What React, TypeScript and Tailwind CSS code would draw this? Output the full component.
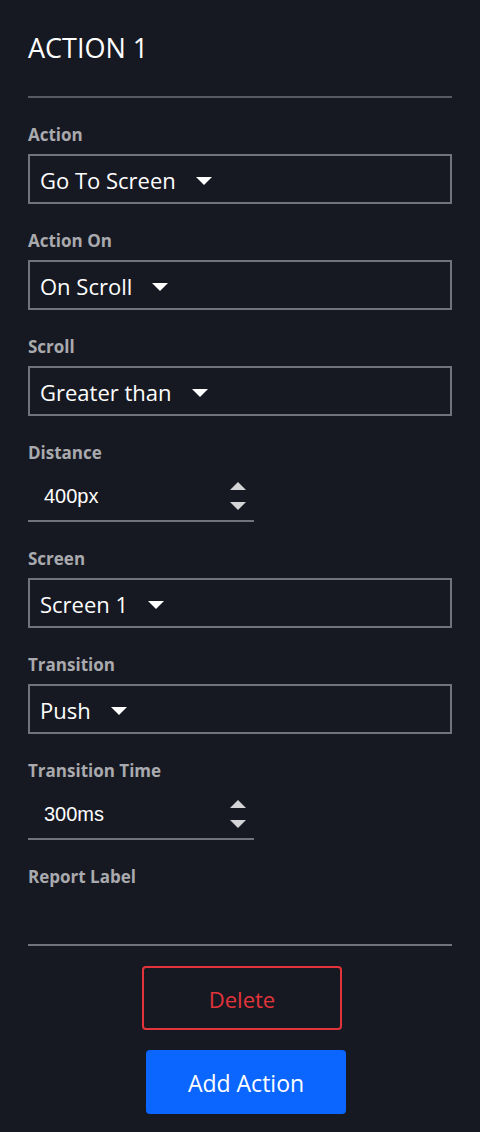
import { ReactNode } from "react"

function Caret() {
  return (
    <svg width="16" height="8" viewBox="0 0 16 8" className="ml-[20px] shrink-0">
      <path d="M0 0 L16 0 L8 8 Z" fill="#ffffff" />
    </svg>
  )
}

function Spinner() {
  return (
    <div className="flex flex-col items-center gap-[12px]">
      <svg width="16" height="8" viewBox="0 0 16 8">
        <path d="M0 8 L16 8 L8 0 Z" fill="#d4d4d6" />
      </svg>
      <svg width="16" height="8" viewBox="0 0 16 8">
        <path d="M0 0 L16 0 L8 8 Z" fill="#d4d4d6" />
      </svg>
    </div>
  )
}

function Field({ label, last, children }: { label: string; last?: boolean; children: ReactNode }) {
  return (
    <div className={last ? "" : "mb-[24px]"}>
      <div className="text-[17px] leading-[22px] font-bold text-[#a9aaae] pt-[2px] mb-[8px]">{label}</div>
      {children}
    </div>
  )
}

function Select({ value }: { value: string }) {
  return (
    <div className="h-[50px] border-2 border-[#70737d] flex items-center pl-[10px] pt-[3px]">
      <span className="text-[22px] text-white">{value}</span>
      <Caret />
    </div>
  )
}

function NumberInput({ value }: { value: string }) {
  return (
    <div className="h-[50px] w-[226px] border-b-2 border-[#70737d] flex items-center justify-between pl-[16px] pr-[8px]">
      <span className="text-[20px] text-white" style={{ fontFamily: '"Liberation Sans", Arial, sans-serif' }}>
        {value}
      </span>
      <Spinner />
    </div>
  )
}

export default function App() {
  return (
    <div
      className="w-[480px] min-h-[1132px] bg-[#171922] px-[28px] pt-[30px]"
      style={{ fontFamily: '"Open Sans", "Noto Sans", sans-serif' }}
    >
      <h1 className="text-[27px] leading-[36px] text-white font-normal">ACTION 1</h1>
      <div className="mt-[30px] border-t-2 border-[#575a64] mb-[24px]" />

      <Field label="Action">
        <Select value="Go To Screen" />
      </Field>
      <Field label="Action On">
        <Select value="On Scroll" />
      </Field>
      <Field label="Scroll">
        <Select value="Greater than" />
      </Field>
      <Field label="Distance">
        <NumberInput value="400px" />
      </Field>
      <Field label="Screen">
        <Select value="Screen 1" />
      </Field>
      <Field label="Transition">
        <Select value="Push" />
      </Field>
      <Field label="Transition Time">
        <NumberInput value="300ms" />
      </Field>
      <Field label="Report Label" last>
        <div className="h-[50px] border-b-2 border-[#70737d]" />
      </Field>

      <div className="flex flex-col items-start pt-[20px]">
        <button className="ml-[114px] w-[200px] h-[64px] border-2 border-[#e3343b] rounded-[4px] text-[#e3343b] text-[22px] pt-[3px]">
          Delete
        </button>
        <button className="ml-[118px] mt-[20px] w-[200px] h-[64px] bg-[#0b66ff] rounded-[4px] text-white text-[23px] pt-[2px]">
          Add Action
        </button>
      </div>
    </div>
  )
}
